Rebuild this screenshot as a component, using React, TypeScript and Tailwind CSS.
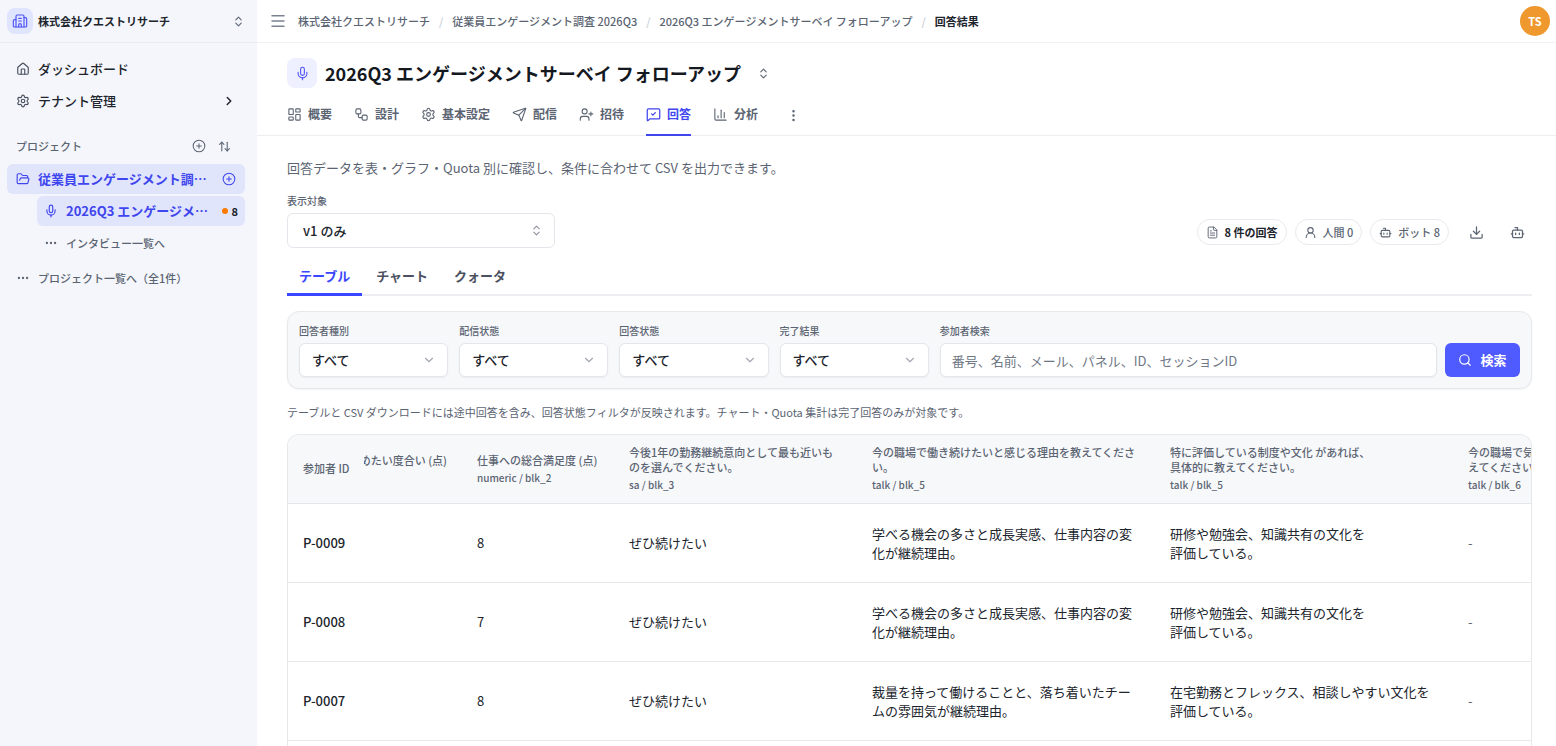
import React from "react"
import {
  ArrowUpDown,
  Bot,
  Building2,
  ChartColumn,
  ChevronDown,
  ChevronRight,
  ChevronsUpDown,
  CirclePlus,
  Download,
  Ellipsis,
  EllipsisVertical,
  FileText,
  FolderOpen,
  House,
  LayoutDashboard,
  Menu,
  Mic,
  Search,
  Send,
  Settings,
  UserPlus,
  UserRound,
  Workflow,
} from "lucide-react"

function MessageCheck({ className }: { className?: string }) {
  return (
    <svg
      className={className}
      viewBox="0 0 24 24"
      fill="none"
      stroke="currentColor"
      strokeWidth={2}
      strokeLinecap="round"
      strokeLinejoin="round"
    >
      <path d="M22 17a2 2 0 0 1-2 2H6.828a2 2 0 0 0-1.414.586l-2.202 2.202A.71.71 0 0 1 2 21.286V5a2 2 0 0 1 2-2h16a2 2 0 0 1 2 2z" />
      <path d="m9 11 2 2 4-4" />
    </svg>
  )
}

const breadcrumbs = [
  "株式会社クエストリサーチ",
  "従業員エンゲージメント調査 2026Q3",
  "2026Q3 エンゲージメントサーベイ フォローアップ",
]

const pageTabs = [
  { label: "概要", icon: LayoutDashboard },
  { label: "設計", icon: Workflow },
  { label: "基本設定", icon: Settings },
  { label: "配信", icon: Send },
  { label: "招待", icon: UserPlus },
  { label: "回答", icon: MessageCheck, active: true },
  { label: "分析", icon: ChartColumn },
]

const filters = [
  { id: "respondent", label: "回答者種別" },
  { id: "delivery", label: "配信状態" },
  { id: "status", label: "回答状態" },
  { id: "result", label: "完了結果" },
]

const columns = [
  { lines: ["仕事への総合満足度 (点)"], meta: "numeric / blk_2" },
  { lines: ["今後1年の勤務継続意向として最も近いも", "のを選んでください。"], meta: "sa / blk_3" },
  { lines: ["今の職場で働き続けたいと感じる理由を教えてくださ", "い。"], meta: "talk / blk_5" },
  { lines: ["特に評価している制度や文化 があれば、", "具体的に教えてください。"], meta: "talk / blk_5" },
  { lines: ["今の職場で気", "えてください"], meta: "talk / blk_6" },
]

const rows = [
  {
    id: "P-0009",
    score: 8,
    intent: "ぜひ続けたい",
    reason: ["学べる機会の多さと成長実感、仕事内容の変", "化が継続理由。"],
    culture: ["研修や勉強会、知識共有の文化を", "評価している。"],
  },
  {
    id: "P-0008",
    score: 7,
    intent: "ぜひ続けたい",
    reason: ["学べる機会の多さと成長実感、仕事内容の変", "化が継続理由。"],
    culture: ["研修や勉強会、知識共有の文化を", "評価している。"],
  },
  {
    id: "P-0007",
    score: 8,
    intent: "ぜひ続けたい",
    reason: ["裁量を持って働けることと、落ち着いたチー", "ムの雰囲気が継続理由。"],
    culture: ["在宅勤務とフレックス、相談しやすい文化を", "評価している。"],
  },
]

function Lines({ lines }: { lines: string[] }) {
  return (
    <>
      {lines.map((line, index) => (
        <span key={index} className="block whitespace-nowrap">
          {line}
        </span>
      ))}
    </>
  )
}

function Sidebar() {
  return (
    <aside className="flex w-[257px] shrink-0 flex-col bg-[#f4f6fb]">
      <button className="flex h-[43px] items-center gap-[5px] border-b border-[#e9ebf1] pr-3 pl-[7px] text-left">
        <span className="flex size-[26px] items-center justify-center rounded-lg bg-[#e0e5ff] text-[#4f55f5]">
          <Building2 className="size-4" strokeWidth={1.75} />
        </span>
        <span className="flex-1 text-[11px] font-bold text-[#20242c]">株式会社クエストリサーチ</span>
        <ChevronsUpDown className="size-[13px] text-[#5b6472]" />
      </button>

      <nav className="flex flex-col px-[7px] pt-[11px] text-[13px]">
        <a href="#" className="flex h-[30px] items-center gap-2 px-[9px] font-medium text-[#20242c]">
          <House className="size-[14px] text-[#4b5160]" />
          ダッシュボード
        </a>
        <a href="#" className="mt-0.5 flex h-[30px] items-center gap-2 px-[9px] font-medium text-[#20242c]">
          <Settings className="size-[14px] text-[#4b5160]" />
          <span className="flex-1">テナント管理</span>
          <ChevronRight className="mr-[5px] size-[14px]" strokeWidth={2.5} />
        </a>

        <div className="mt-[17px] flex h-[26px] items-center gap-3 pr-[19px] pl-[9px] text-[#5b6472]">
          <h2 className="flex-1 text-[11px] font-medium">プロジェクト</h2>
          <button aria-label="プロジェクトを追加">
            <CirclePlus className="size-[14px]" strokeWidth={1.75} />
          </button>
          <button aria-label="並び替え">
            <ArrowUpDown className="size-[13px]" />
          </button>
        </div>

        <div className="mt-[5px] mr-[5px] flex h-[30px] items-center gap-2 rounded-md bg-[#e1e5fb] px-[9px] font-semibold text-[#4046ee]">
          <FolderOpen className="size-[14px]" />
          <a href="#" className="flex-1 whitespace-nowrap">従業員エンゲージメント調…</a>
          <button aria-label="インタビューを追加">
            <CirclePlus className="size-[14px]" strokeWidth={1.75} />
          </button>
        </div>
        <a
          href="#"
          className="mt-0.5 mr-[5px] ml-[30px] flex h-[30px] items-center gap-2 rounded-md bg-[#e1e5fb] px-[7px] font-semibold text-[#4046ee]"
        >
          <Mic className="size-[14px]" />
          <span className="flex-1 whitespace-nowrap">2026Q3 エンゲージメ…</span>
          <span className="flex items-center gap-1 text-[11px] text-[#20242c]">
            <span className="size-1.5 rounded-full bg-[#ff7a00]" />8
          </span>
        </a>
        <a href="#" className="mt-0.5 ml-[30px] flex h-[30px] items-center gap-2 px-[7px] text-[11px] font-medium text-[#5b6472]">
          <Ellipsis className="size-[14px]" />
          インタビュー一覧へ
        </a>
        <a href="#" className="mt-[5px] flex h-[30px] items-center gap-2 px-[9px] text-[11px] font-medium text-[#5b6472]">
          <Ellipsis className="size-[14px]" />
          プロジェクト一覧へ（全1件）
        </a>
      </nav>
    </aside>
  )
}

function TopBar() {
  return (
    <header className="flex h-[43px] shrink-0 items-center border-b border-[#f1f2f5] pr-1.5 pl-3 text-[11px]">
      <button aria-label="メニュー" className="mr-[11px] text-[#7a8290]">
        <Menu className="size-[18px]" />
      </button>
      <nav className="flex flex-1 items-center gap-[9px] font-medium text-[#5b6472]">
        {breadcrumbs.map((crumb) => (
          <React.Fragment key={crumb}>
            <a href="#">{crumb}</a>
            <span className="text-[#c9cdd5]">/</span>
          </React.Fragment>
        ))}
        <span className="font-bold text-[#20242c]">回答結果</span>
      </nav>
      <button className="size-[30px] rounded-full bg-[#ee982d] text-[11px] font-bold text-white">TS</button>
    </header>
  )
}

function PageHeader() {
  return (
    <div className="shrink-0 border-b border-[#eceef1] pt-[15px] pl-[30px]">
      <div className="flex h-[30px] items-center gap-2">
        <span className="flex size-[30px] items-center justify-center rounded-lg bg-[#eeefff] text-[#4f55f5]">
          <Mic className="size-[15px]" strokeWidth={1.75} />
        </span>
        <h1 className="text-[18px] font-bold text-[#14181f]">2026Q3 エンゲージメントサーベイ フォローアップ</h1>
        <button aria-label="切り替え" className="ml-2 text-[#5b6472]">
          <ChevronsUpDown className="size-[13px]" />
        </button>
      </div>
      <nav className="-mb-px flex gap-[22px] pt-1.5 text-xs">
        {pageTabs.map(({ label, icon: Icon, active }) => (
          <a
            key={label}
            href="#"
            className={
              active
                ? "flex h-[42px] items-center gap-1.5 border-b-2 border-[#4046ee] font-semibold text-[#4046ee]"
                : "flex h-[42px] items-center gap-1.5 border-b-2 border-transparent font-semibold text-[#5b6472]"
            }
          >
            <Icon className="size-[15px]" strokeWidth={1.75} />
            {label}
          </a>
        ))}
        <button aria-label="その他" className="ml-1.5 text-[#5b6472]">
          <EllipsisVertical className="size-[15px]" />
        </button>
      </nav>
    </div>
  )
}

function Toolbar() {
  return (
    <div className="mt-[15px] flex items-end justify-between">
      <div>
        <label htmlFor="version" className="block text-[10px] leading-4 font-medium text-[#5b6472]">
          表示対象
        </label>
        <div className="relative mt-1">
          <select
            id="version"
            className="h-[35px] w-[268px] appearance-none rounded-md border border-[#e4e6eb] bg-white px-[15px] text-[13px] font-medium text-[#20242c]"
          >
            <option>v1 のみ</option>
          </select>
          <ChevronsUpDown className="pointer-events-none absolute top-[11px] right-3 size-[13px] text-[#8b919c]" />
        </div>
      </div>
      <div className="mb-px flex items-center gap-2 text-[11px] font-medium text-[#5b6472]">
        <span className="flex h-[26px] items-center gap-1.5 rounded-full border border-[#e8eaef] px-2 font-semibold text-[#20242c]">
          <FileText className="size-[13px] text-[#5b6472]" strokeWidth={1.75} />8 件の回答
        </span>
        <span className="flex h-[26px] items-center gap-1.5 rounded-full border border-[#e8eaef] px-2">
          <UserRound className="size-[13px]" />
          人間 0
        </span>
        <span className="flex h-[26px] items-center gap-1.5 rounded-full border border-[#e8eaef] px-2">
          <Bot className="size-[13px]" />
          ボット 8
        </span>
        <div className="ml-1 flex gap-[11px]">
          <button aria-label="ダウンロード" className="flex size-[30px] items-center justify-center">
            <Download className="size-[15px]" />
          </button>
          <button aria-label="ボット" className="flex size-[30px] items-center justify-center">
            <Bot className="size-[15px]" />
          </button>
        </div>
      </div>
    </div>
  )
}

function FilterPanel() {
  return (
    <form className="mt-[15px] flex items-end gap-2 rounded-xl border border-[#e6e8ec] bg-[#f7f8fa] p-[11px] shadow-xs">
      <div className="grid flex-1 grid-cols-[3fr_3fr_3fr_3fr_10fr] gap-[11px]">
        {filters.map((filter) => (
          <div key={filter.id}>
            <label htmlFor={filter.id} className="block text-[10px] leading-4 font-medium text-[#5b6472]">
              {filter.label}
            </label>
            <div className="relative mt-1">
              <select
                id={filter.id}
                className="h-[34px] w-full appearance-none rounded-md border border-[#e4e6eb] bg-white px-3 text-[13px] font-medium text-[#20242c] shadow-xs"
              >
                <option>すべて</option>
              </select>
              <ChevronDown className="pointer-events-none absolute top-[10px] right-3 size-[14px] text-[#a4a9b3]" />
            </div>
          </div>
        ))}
        <div>
          <label htmlFor="search" className="block text-[10px] leading-4 font-medium text-[#5b6472]">
            参加者検索
          </label>
          <input
            id="search"
            type="text"
            placeholder="番号、名前、メール、パネル、ID、セッションID"
            className="mt-1 block h-[34px] w-full rounded-md border border-[#e4e6eb] bg-white px-[11px] text-[13px] shadow-xs placeholder:text-[#6f7785]"
          />
        </div>
      </div>
      <button
        type="button"
        className="flex h-[34px] w-[75px] items-center justify-center gap-2 rounded-md bg-[#4f5bff] text-[13px] font-semibold text-white"
      >
        <Search className="size-[14px]" />
        検索
      </button>
    </form>
  )
}

function ResponseTable() {
  return (
    <div className="mt-[13px] flex-1 overflow-hidden rounded-t-xl border border-b-0 border-[#e6e8ec]">
      <table className="w-[1465px] table-fixed text-left text-[13px] text-[#20242c]">
        <colgroup>
          <col className="w-[76px]" />
          <col className="w-[98px]" />
          <col className="w-[152px]" />
          <col className="w-[243px]" />
          <col className="w-[298px]" />
          <col className="w-[298px]" />
          <col className="w-[300px]" />
        </colgroup>
        <thead className="bg-[#f7f8fa] text-[11px] leading-[15px] text-[#5b6472]">
          <tr className="h-[68px] border-b border-[#e4e6eb]">
            <th className="pl-[15px] font-medium whitespace-nowrap">参加者 ID</th>
            <th className="overflow-hidden pr-[15px] font-medium">
              <span className="flex justify-end whitespace-nowrap">めたい度合い (点)</span>
              <span className="mt-0.5 block">&nbsp;</span>
            </th>
            {columns.map((column, index) => (
              <th key={index} className="pl-[15px] font-medium">
                <Lines lines={column.lines} />
                <span className="mt-0.5 block text-[10px]">{column.meta}</span>
              </th>
            ))}
          </tr>
        </thead>
        <tbody>
          {rows.map((row) => (
            <tr key={row.id} className="h-[79px] border-b border-[#e6e8ec] leading-[19px]">
              <td className="pl-[15px] font-medium">{row.id}</td>
              <td />
              <td className="pl-[15px]">{row.score}</td>
              <td className="pl-[15px]">{row.intent}</td>
              <td className="pl-[15px]">
                <Lines lines={row.reason} />
              </td>
              <td className="pl-[15px]">
                <Lines lines={row.culture} />
              </td>
              <td className="pl-[15px] text-[#5b6472]">-</td>
            </tr>
          ))}
        </tbody>
      </table>
    </div>
  )
}

export default function App() {
  return (
    <div className="flex h-screen overflow-hidden bg-white font-['Noto_Sans_CJK_JP',sans-serif]">
      <Sidebar />
      <div className="flex min-w-0 flex-1 flex-col">
        <TopBar />
        <PageHeader />
        <main className="flex min-h-0 flex-1 flex-col pt-[22px] pr-6 pl-[30px]">
          <p className="text-[13px] leading-5 text-[#5b6472]">
            回答データを表・グラフ・Quota 別に確認し、条件に合わせて CSV を出力できます。
          </p>
          <Toolbar />
          <div role="tablist" className="mt-[10px] flex border-b-2 border-[#eceef2] text-[13px] font-semibold text-[#4b5160]">
            <button role="tab" className="-mb-0.5 h-[38px] border-b-3 border-[#3b46ff] px-3 text-[#3b46ff]">
              テーブル
            </button>
            <button role="tab" className="ml-0.5 px-3">チャート</button>
            <button role="tab" className="ml-0.5 px-3">クォータ</button>
          </div>
          <FilterPanel />
          <p className="mt-[14px] text-[11px] leading-[18px] text-[#5b6472]">
            テーブルと CSV ダウンロードには途中回答を含み、回答状態フィルタが反映されます。チャート・Quota 集計は完了回答のみが対象です。
          </p>
          <ResponseTable />
        </main>
      </div>
    </div>
  )
}
